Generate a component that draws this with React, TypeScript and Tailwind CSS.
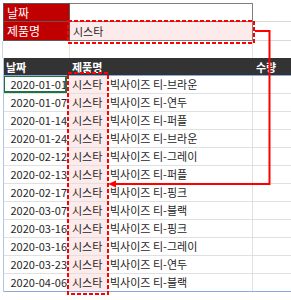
import React from 'react';

const ROWS: [string, string][] = [
  ['2020-01-01', '브라운'],
  ['2020-01-07', '연두'],
  ['2020-01-14', '퍼플'],
  ['2020-01-24', '브라운'],
  ['2020-02-12', '그레이'],
  ['2020-02-13', '퍼플'],
  ['2020-02-17', '핑크'],
  ['2020-03-07', '블랙'],
  ['2020-03-16', '핑크'],
  ['2020-03-16', '그레이'],
  ['2020-03-23', '연두'],
  ['2020-04-06', '블랙'],
];

const FONT = "font-['Noto_Sans_CJK_KR','Noto_Sans',sans-serif]";

export default function App() {
  return (
    <div className={`relative w-[291px] h-[300px] bg-white overflow-hidden text-[11px] text-[#262626] ${FONT}`}>
      {/* criteria area */}
      <div className="pt-[3px]">
        <div className="flex h-[19px]">
          <div className="w-[3px]" />
          <div className="w-[67px] bg-[#c00000] text-white text-[12px] leading-[18px] pl-[3px] border border-[#5a5a5a]">날짜</div>
          <div className="w-[183px] border-y border-r border-[#7f7f7f]" />
          <div className="flex-1 border-b border-[#d9d9d9]" />
        </div>
        <div className="flex h-[19px]">
          <div className="w-[3px]" />
          <div className="w-[67px] bg-[#c00000] text-white text-[12px] leading-[18px] pl-[3px] border-x border-b border-[#5a5a5a]">제품명</div>
          <div className="w-[183px] bg-[#fdeaea] leading-[18px] pl-[3px] border-b border-r border-[#7f7f7f]">시스타</div>
          <div className="flex-1 border-b border-[#d9d9d9]" />
        </div>
        <div className="flex h-[17px]">
          <div className="w-[3px] border-r border-[#c8d3e6]" />
          <div className="w-[67px] border-r border-[#e3e3e3]" />
          <div className="w-[183px] border-r border-[#e3e3e3]" />
          <div className="flex-1" />
        </div>
      </div>

      {/* table */}
      <div className="ml-[3px] border-l border-[#b4c6e7]">
        <div className="flex h-[18px] bg-[#333333] text-white font-bold text-[11px] leading-[18px] border-b border-[#8ea9db]">
          <div className="w-[63px] pl-[2px]">날짜</div>
          <div className="w-[186px] pl-[5px]">제품명</div>
          <div className="flex-1 pl-[3px]">수량</div>
        </div>
        {ROWS.map(([date, color], i) => (
          <div
            key={i}
            className={`flex h-[18px] leading-[17px] border-b ${i === ROWS.length - 1 ? 'border-[#8ea9db]' : 'border-[#e0e0e0]'}`}
          >
            <div className="relative w-[63px] text-right pr-0 overflow-hidden whitespace-nowrap">
              {date}
              {i === 0 && <div className="absolute -top-px left-[-1px] right-0 bottom-0 border-2 border-[#217346]" />}
            </div>
            <div className="w-[186px] flex border-r border-[#e0e0e0] whitespace-nowrap">
              <span className="w-[41px] pl-[5px] bg-[#fdeaea]">시스타</span>
              <span className="pl-[2px]">빅사이즈 티-{color}</span>
            </div>
            <div className="flex-1" />
          </div>
        ))}
      </div>

      {/* overlay: dashed boxes and connector */}
      <svg className="absolute inset-0 pointer-events-none" width="291" height="300" viewBox="0 0 291 300">
        <rect x="68" y="21" width="186" height="22" fill="none" stroke="#ff0000" strokeWidth="2" strokeDasharray="4 2" />
        <rect x="68" y="73" width="40" height="221" fill="none" stroke="#ff0000" strokeWidth="2" strokeDasharray="4 2" />
        <path d="M255 31 H269.5 V184 H115" fill="none" stroke="#ff0000" strokeWidth="2" />
        <polygon points="108,184 116,180.5 116,187.5" fill="#ff0000" />
      </svg>
    </div>
  );
}
